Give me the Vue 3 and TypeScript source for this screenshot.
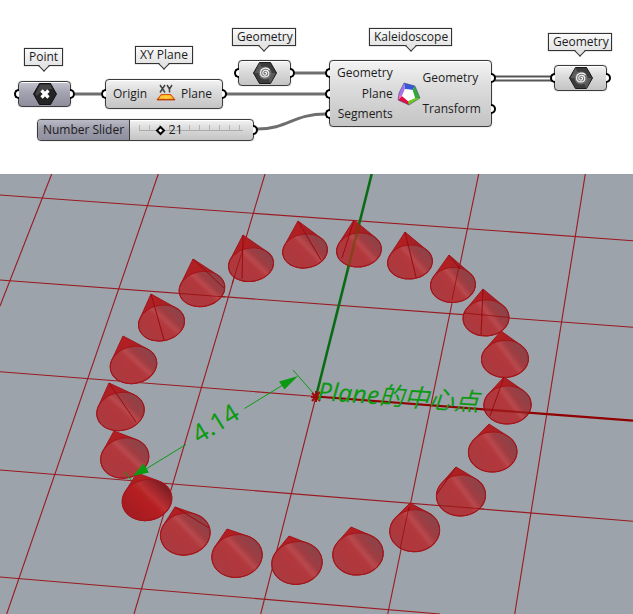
<script setup lang="ts">
import { computed, ref } from 'vue'

const segments = ref(21)
const valueOffset = computed(() => `${segments.value}%`)

type Cone = {
  apex: [number, number]
  base: [number, number, number, number]
  seam?: [number, number]
  selected?: boolean
}

// Apex, base ellipse (cx, cy, rx, ry) and the surface seam of every copy.
const cones: Cone[] = [
  { apex: [298, 221], base: [305, 251, 22.5, 17], seam: [321, 260] },
  { apex: [354, 220], base: [359, 250, 22.5, 17], seam: [342, 258] },
  { apex: [405, 232], base: [410, 262, 22.5, 17], seam: [416, 277] },
  { apex: [449, 255], base: [453, 285, 22.5, 17.5], seam: [460, 269] },
  { apex: [483, 289], base: [486, 318, 23, 18], seam: [481, 335] },
  { apex: [501, 331], base: [505, 359, 23.5, 18.5] },
  { apex: [504, 377], base: [507.5, 405, 23.7, 19], seam: [490, 416] },
  { apex: [489, 424], base: [492.7, 452, 24.3, 20] },
  { apex: [456, 467], base: [461, 495.5, 24.6, 20.5], seam: [437, 494] },
  { apex: [410, 503], base: [414.7, 530.7, 25, 21] },
  { apex: [351, 527], base: [358, 554, 25.3, 21] },
  { apex: [289, 536], base: [297, 563, 25.3, 21.3] },
  { apex: [227, 529], base: [237, 556, 25.3, 21.3] },
  { apex: [175, 507], base: [185.3, 534, 25, 21], seam: [209, 528] },
  { apex: [114, 431], base: [124.7, 458, 24.3, 20] },
  { apex: [109, 383], base: [120.5, 411.5, 24, 19], seam: [136, 422] },
  { apex: [123, 336], base: [133.5, 365, 23.5, 18.5] },
  { apex: [151, 294], base: [161.5, 323, 23.2, 17.8], seam: [164, 340] },
  { apex: [193, 259], base: [202, 289, 23, 17.5], seam: [224, 288] },
  { apex: [243, 235], base: [251, 264.7, 22.7, 16.7], seam: [242, 279] },
  { apex: [137, 473], base: [147, 500, 25, 20.5], selected: true },
]

// Tangent construction in the ellipse's own frame gives the silhouette.
const shapes = cones.map((c) => {
  const [cx, cy, rx, ry] = c.base
  const tilt = -13 + ((cx - 120) / 390) * 11
  const a = (tilt * Math.PI) / 180
  const dx = c.apex[0] - cx
  const dy = c.apex[1] - cy
  const ux = (dx * Math.cos(a) + dy * Math.sin(a)) / rx
  const uy = (-dx * Math.sin(a) + dy * Math.cos(a)) / ry
  const dir = Math.atan2(uy, ux)
  const spread = Math.acos(Math.min(1, 1 / Math.hypot(ux, uy)))
  const at = (t: number): string => {
    const x = rx * Math.cos(t)
    const y = ry * Math.sin(t)
    const px = cx + x * Math.cos(a) - y * Math.sin(a)
    const py = cy + x * Math.sin(a) + y * Math.cos(a)
    return `${px.toFixed(1)} ${py.toFixed(1)}`
  }
  const right = at(dir + spread)
  const left = at(dir - spread)
  return {
    ...c,
    cx, cy, rx, ry, tilt,
    hull: `M${c.apex.join(' ')}L${right}A${rx} ${ry} ${tilt.toFixed(1)} 1 1 ${left}Z`,
    seamPath: c.seam ? `M${c.apex.join(' ')}L${c.seam.join(' ')}` : '',
  }
})

const gridLines = [
  'M51.7 174L0 306', 'M158.3 174L6.7 614', 'M265 174L134 614',
  'M316 396.5L260.7 614', 'M478.7 174L387.7 614', 'M585.3 174L514.7 614',
  'M0 195L633 240.7', 'M0 280L633 327.3', 'M0 371.7L316 396.5',
  'M0 470L633 521.3', 'M0 577L440 614',
]

const spiral = 'M12 12c0-1 1.600-1 1.600.5 0 2.200-3.800 2.200-3.800-.6 0-3.600 6-3.600 6 .8 0 4.600-8.200 4.300-8.200-.8 0-5 6.500-6 9-3'
</script>

<template>
  <main class="page">
    <section class="canvas" aria-label="Node graph">
      <svg class="wires" width="633" height="174" aria-hidden="true">
        <g class="wire">
          <path d="M75 94H101M226 94H326M295 73H326" />
          <path d="M257 129C288 129 293 114 326 114" />
        </g>
        <path class="wire thin" d="M495 76.500H551M495 80.500H551" />
      </svg>

      <span class="tag tag-point">Point</span>
      <span class="tag tag-plane">XY Plane</span>
      <span class="tag tag-source">Geometry</span>
      <span class="tag tag-kaleido">Kaleidoscope</span>
      <span class="tag tag-result">Geometry</span>

      <article class="node param point">
        <i class="port in"></i>
        <svg class="hex" viewBox="0 0 24 24" aria-label="Point">
          <path d="M6.500 1.500H17.500L23.500 12L17.500 22.500H6.500L.5 12Z" fill="#242424" stroke="#111" />
          <path d="M7 2.500H17L19.500 7Q9 7 4 14L2.500 12Z" fill="#777" opacity=".4" />
          <path d="M8.500 8.500l7 7M15.500 8.500l-7 7" stroke="#fff" stroke-width="3.200" />
        </svg>
        <i class="port out"></i>
      </article>

      <article class="node plane">
        <div class="rows"><span class="cell"><i class="port in"></i>Origin</span></div>
        <svg class="icon-plane" viewBox="0 0 20 20" aria-label="XY">
          <path d="M4 1l5 7.500M9 1L4 8.500M11 1l2.500 4L16 1M13.500 5v3.500" fill="none" stroke="#444" stroke-width="1.500" />
          <path d="M5.500 10.500h9l4 5h-17z" fill="#ffb51e" stroke="#d9570b" stroke-width="1.200" />
          <path d="M10 11v4M4 13h12" stroke="#ffe06a" stroke-width=".8" />
          <path d="M1 15.800h18" stroke="#b3400f" stroke-width="1.200" />
        </svg>
        <div class="rows"><span class="cell">Plane<i class="port out"></i></span></div>
      </article>

      <article class="node slider">
        <label class="slider-name" for="segments">Number Slider</label>
        <div class="slider-body">
          <div class="track">
            <input id="segments" v-model.number="segments" type="range" min="0" max="100" />
            <output class="value" for="segments" :style="{ left: valueOffset }">{{ segments }}</output>
          </div>
        </div>
        <i class="port out"></i>
      </article>

      <article v-for="name in ['source', 'result']" :key="name" class="node param" :class="name">
        <i class="port in"></i>
        <svg class="hex" viewBox="0 0 24 24" aria-label="Geometry">
          <path d="M6.500 1.500H17.500L23.500 12L17.500 22.500H6.500L.5 12Z" fill="#3c3c3c" stroke="#1a1a1a" />
          <path d="M6.500 2L12 12L1.500 12ZM17.500 22L12 12L22.500 12Z" fill="#707070" opacity=".6" />
          <circle cx="12" cy="12" r="6.500" fill="#6e6e6e" />
          <path :d="spiral" fill="none" stroke="#f2f2f2" stroke-width="1.200" />
        </svg>
        <i class="port out"></i>
      </article>

      <article class="node kaleido">
        <div class="rows inputs">
          <span class="cell"><i class="port in"></i>Geometry</span>
          <span class="cell"><i class="port in"></i>Plane</span>
          <span class="cell"><i class="port in"></i>Segments</span>
        </div>
        <svg class="icon-kaleido" viewBox="0 0 24 24" aria-label="Kaleidoscope">
          <path d="M7 1L18 4L15.500 8L8 7Z" fill="#3458d8" />
          <path d="M18 4L23 16L18 16L15.500 8Z" fill="#35a83b" />
          <path d="M23 16L12 23L11 19L18 16Z" fill="#6ccb1c" />
          <path d="M12 23L1 18L5 14L11 19Z" fill="#e50d46" />
          <path d="M1 18L2 11L7 1L8 7L5 14Z" fill="#a675ee" />
          <path d="M1 18L2 13L5 14Z" fill="#ef6db0" />
          <path d="M8 7L15.500 8L18 16L11 19L5 14Z" fill="#fff" />
          <path d="M7 1L18 4L23 16L12 23L1 18L2 11Z" fill="none" stroke="#33406b" stroke-opacity=".5" />
        </svg>
        <div class="rows outputs">
          <span class="cell">Geometry<i class="port out"></i></span>
          <span class="cell">Transform<i class="port out"></i></span>
        </div>
      </article>
    </section>

    <svg class="viewport" viewBox="0 174 633 440" role="img" aria-label="Perspective viewport">
      <defs>
        <linearGradient id="skin" x1="0.050" y1="0.750" x2="0.950" y2="0.250">
          <stop offset="0" stop-color="#a53f45" />
          <stop offset=".2" stop-color="#ae393e" />
          <stop offset=".5" stop-color="#b2393d" />
          <stop offset=".6" stop-color="#ba4a4e" />
          <stop offset=".72" stop-color="#a03e43" />
          <stop offset="1" stop-color="#88454b" />
        </linearGradient>
        <linearGradient id="skin-selected" x1="0.050" y1="0.750" x2="0.950" y2="0.250">
          <stop offset="0" stop-color="#a01c21" />
          <stop offset=".5" stop-color="#b71e22" />
          <stop offset=".62" stop-color="#bd3034" />
          <stop offset="1" stop-color="#761b20" />
        </linearGradient>
        <linearGradient id="tip" x1="0" x2="1">
          <stop offset="0" stop-color="#a3191d" />
          <stop offset=".35" stop-color="#b51518" />
          <stop offset="1" stop-color="#821d22" />
        </linearGradient>
      </defs>
      <rect y="174" width="633" height="440" fill="#9da3ab" />
      <path v-for="line in gridLines" :key="line" :d="line" class="grid" />
      <path d="M371.700 174L316 396.500" stroke="#0b6b14" stroke-width="2.600" />
      <path d="M316 396.500L633 420.700" stroke="#900000" stroke-width="2.200" />

      <g v-for="(s, i) in shapes" :key="i">
        <path :d="s.hull" fill="url(#tip)" opacity=".93" />
        <ellipse
          :cx="s.cx" :cy="s.cy" :rx="s.rx" :ry="s.ry"
          :transform="`rotate(${s.tilt} ${s.cx} ${s.cy})`"
          :fill="s.selected ? 'url(#skin-selected)' : 'url(#skin)'"
          fill-opacity=".96" class="rim"
        />
        <path :d="s.hull" class="rim" fill="none" />
        <path v-if="s.seamPath" :d="s.seamPath" class="seam" />
      </g>

      <g class="ghost">
        <path d="M348.500 267L359 224" stroke="#6b4a08" stroke-width="2.600" />
        <path d="M484 409.300L531 413" stroke="#900000" stroke-width="2.200" />
        <path d="M134 479L147 500" stroke="#8a3a10" />
        <path d="M232 284L243 249M180 293.500L225 297M452 300L459 266M464 313L509 317.500M400 549L409 507M440 505.500L484 509" stroke="#900000" />
      </g>

      <g stroke="#0b9a12" fill="#0b9a12">
        <path d="M146 469L186 444.500M244.500 408.500L282 385.500M293 370L314 394M125 472L131 480" fill="none" />
        <path d="M133 476L143.500 463.500L149 472.500Z" stroke="none" />
        <path d="M298 376L279 381.500L284.500 389.500Z" stroke="none" />
      </g>
      <path d="M312 393l8 8M320 392l-8 9M316 391v11M311 397h10" stroke="#9c0b0b" stroke-width="2" />
      <text class="measure" transform="translate(199 444) rotate(-32)">4.14</text>
      <text class="note" transform="translate(317 400) rotate(4)">Plane的中心点</text>
    </svg>
  </main>
</template>

<style>
body {
  margin: 0;
  background: #fff;
}
</style>

<style scoped>
.page {
  font-family: "Open Sans", "Noto Sans", "Noto Sans CJK SC", sans-serif;
  font-size: 12px;
  line-height: 16px;
  color: #1c1c1c;
}

.canvas {
  position: relative;
  height: 174px;
  overflow: hidden;
  background: #fff;
}

.wires {
  position: absolute;
  top: 0;
  left: 0;
}

.wire {
  fill: none;
  stroke: #6e6e6e;
  stroke-width: 3;
}

.wire.thin {
  stroke: #555;
  stroke-width: 2;
}

.tag {
  position: absolute;
  box-sizing: border-box;
  height: 18px;
  padding: 0 4px;
  border: 1px solid #333;
  background: linear-gradient(#fafafa, #e4e4e4);
  box-shadow: 0 0 1px #777;
  text-align: center;
  white-space: nowrap;
}

.tag::after {
  content: "";
  position: absolute;
  left: 50%;
  bottom: -5px;
  width: 7px;
  height: 7px;
  margin-left: -4px;
  border: solid #333;
  border-width: 0 1px 1px 0;
  background: linear-gradient(135deg, transparent 50%, #e4e4e4 50%);
  transform: rotate(45deg);
}

.tag-point { left: 24px; top: 48px; width: 39px; }
.tag-plane { left: 135px; top: 46px; width: 58px; }
.tag-source { left: 232px; top: 28px; width: 64px; }
.tag-kaleido { left: 369px; top: 28px; width: 83px; }
.tag-result { left: 548px; top: 33px; width: 64px; }

.node {
  position: absolute;
  box-sizing: border-box;
  display: flex;
  align-items: center;
  border: 1px solid #3c3c3c;
  border-radius: 4px;
  background: linear-gradient(#f4f4f4, #dcdcdc 40%, #c4c4c4);
  box-shadow: inset 0 1px 0 #fff, 0 0 1px #777;
}

.param {
  justify-content: center;
  width: 53px;
  height: 26px;
}

.point {
  left: 18px;
  top: 81px;
  background: linear-gradient(#c4c4cf, #a2a2b0 45%, #8d8d9c);
}

.source { left: 238px; top: 60px; }
.result { left: 554px; top: 65px; }

.plane {
  left: 105px;
  top: 79px;
  width: 118px;
  height: 30px;
  justify-content: space-between;
}

.kaleido {
  left: 329px;
  top: 60px;
  width: 163px;
  height: 67px;
  justify-content: space-between;
}

.hex {
  flex: none;
  width: 24px;
  height: 24px;
}

.icon-plane {
  flex: none;
  width: 20px;
  height: 20px;
  margin-left: 4px;
}

.icon-kaleido {
  flex: none;
  width: 24px;
  height: 24px;
  margin-left: 2px;
}

.rows {
  display: flex;
  flex-direction: column;
  height: 62px;
}

.plane .rows {
  height: auto;
}

.cell {
  position: relative;
  flex: 1;
  display: flex;
  align-items: center;
  padding: 0 10px 0 0;
}

.cell:has(.in) {
  justify-content: flex-end;
  padding: 0 0 0 7px;
}

.port {
  position: absolute;
  box-sizing: border-box;
  top: 50%;
  width: 5px;
  height: 10px;
  margin-top: -5px;
  border: 2px solid #000;
  background: #fff;
}

.port.in {
  left: -5px;
  border-right: 0;
  border-radius: 5px 0 0 5px;
}

.port.out {
  right: -5px;
  border-left: 0;
  border-radius: 0 5px 5px 0;
}

.slider {
  left: 37px;
  top: 119px;
  width: 217px;
  height: 22px;
  align-items: stretch;
}

.slider-name {
  width: 91px;
  border-right: 1px solid #3c3c3c;
  border-radius: 3px 0 0 3px;
  background: linear-gradient(#bbbbc8, #9c9cab 45%, #8f8f9f);
  line-height: 20px;
  text-align: center;
}

.slider-body {
  flex: 1;
  padding: 0 10px 0 9px;
}

.track {
  position: relative;
  height: 20px;
  background:
    linear-gradient(#aaa, #aaa) 0 10px / 100% 1px no-repeat,
    repeating-linear-gradient(90deg, #b2b2b2 0 1px, transparent 1px 10px) 0 5px / 100% 5px no-repeat;
}

.track input {
  position: absolute;
  inset: 0 -4px;
  width: calc(100% + 8px);
  margin: 0;
  appearance: none;
  background: transparent;
}

.track input::-webkit-slider-thumb {
  box-sizing: border-box;
  width: 7px;
  height: 7px;
  appearance: none;
  border: 2px solid #000;
  border-radius: 0;
  background: #fff;
  transform: rotate(45deg);
}

.value {
  position: absolute;
  top: 0;
  padding-right: 2px;
  margin-left: 8px;
  line-height: 20px;
  pointer-events: none;
}

.viewport {
  display: block;
  width: 100%;
  height: auto;
}

.grid {
  stroke: #9a1a20;
  stroke-width: 1.1;
}

.rim {
  stroke: #a4161b;
  stroke-width: 1;
}

.seam {
  stroke: #960d12;
  stroke-width: 1;
}

.ghost {
  opacity: 0.6;
}

.measure,
.note {
  fill: #0b9a12;
  font-family: "Noto Sans", "Noto Sans CJK SC", sans-serif;
  font-size: 25px;
}

.note {
  font-style: italic;
}
</style>
